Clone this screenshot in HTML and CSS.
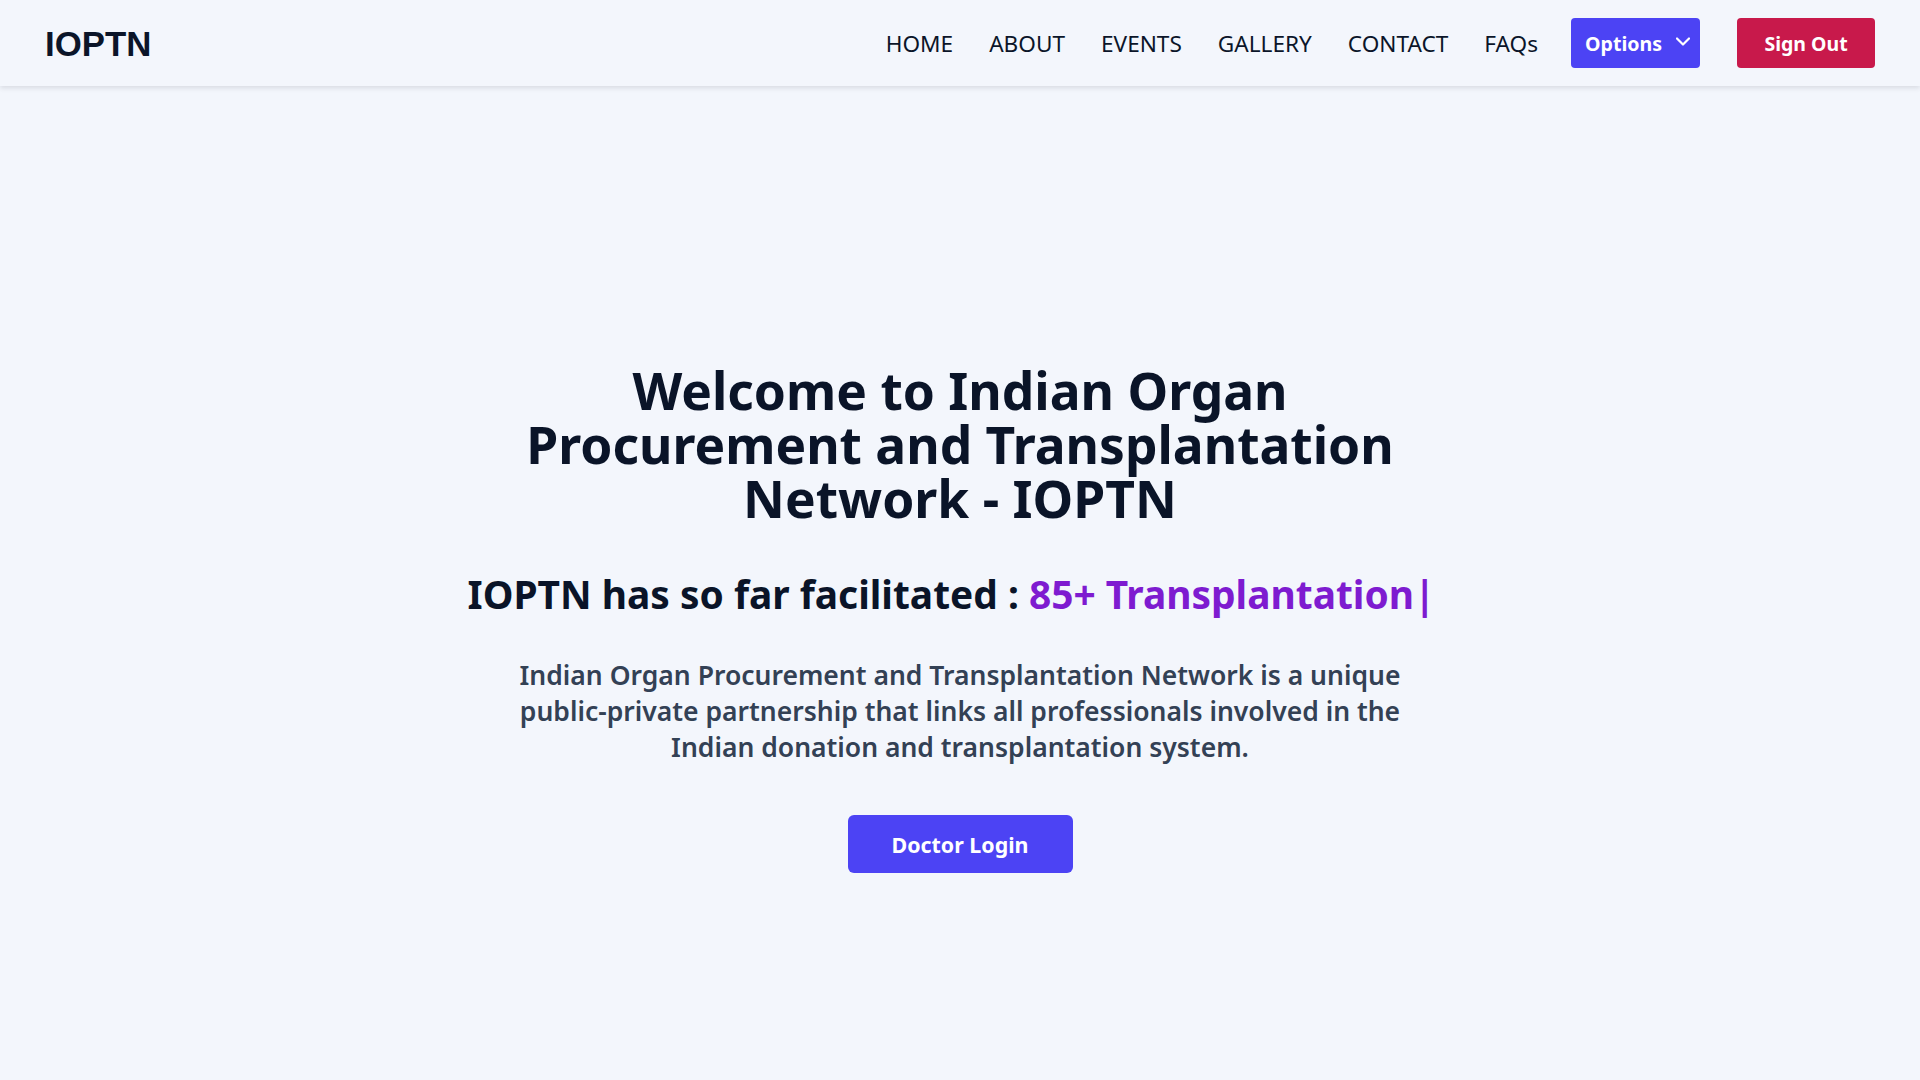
FILE: index.html
```html
<!DOCTYPE html>
<html lang="en">
<head>
<meta charset="utf-8">
<title>IOPTN</title>
<link rel="stylesheet" href="styles.css">
</head>
<body>
<header class="navbar">
  <div class="logo">IOPTN</div>
  <nav class="nav-right">
    <ul class="nav-links">
      <li><a href="#">HOME</a></li>
      <li><a href="#">ABOUT</a></li>
      <li><a href="#">EVENTS</a></li>
      <li><a href="#">GALLERY</a></li>
      <li><a href="#">CONTACT</a></li>
      <li><a href="#">FAQs</a></li>
    </ul>
    <button class="btn btn-options">Options
      <svg class="chevron" width="14" height="9" viewBox="0 0 14 9"><polyline points="1,1.5 7,7.5 13,1.5" fill="none" stroke="#ffffff" stroke-width="2.2" stroke-linecap="round" stroke-linejoin="round"/></svg>
    </button>
    <button class="btn btn-signout">Sign Out</button>
  </nav>
</header>
<main class="hero">
  <h1 class="hero-title">Welcome to Indian Organ Procurement and Transplantation Network - IOPTN</h1>
  <h2 class="hero-sub">IOPTN has so far facilitated : <span class="accent">85+ Transplantation|</span></h2>
  <p class="hero-text">Indian Organ Procurement and Transplantation Network is a unique public-private partnership that links all professionals involved in the Indian donation and transplantation system.</p>
  <button class="btn btn-login">Doctor Login</button>
</main>
</body>
</html>
```
FILE: styles.css
```css
* { box-sizing: border-box; }
html, body { margin: 0; padding: 0; }
body {
  background: #f3f6fc;
  font-family: "Noto Sans", "Open Sans", sans-serif;
  color: #0b1529;
  min-height: 1080px;
}
.navbar {
  height: 86px;
  display: flex;
  align-items: center;
  justify-content: space-between;
  padding: 0 45px 0 45px;
  background: #f3f6fc;
  box-shadow: 0 2px 5px rgba(15, 23, 42, 0.12);
  position: relative;
}
.logo {
  font-family: "Liberation Sans", Arial, sans-serif;
  font-weight: 700;
  font-size: 34.8px;
  color: #0b1529;
  margin-top: 2px;
}
.nav-right {
  display: flex;
  align-items: center;
  gap: 35px;
}
.nav-links {
  list-style: none;
  display: flex;
  gap: 36px;
  margin: 0;
  padding: 0;
}
.nav-links a {
  color: #0b1529;
  text-decoration: none;
  font-size: 22.6px;
  font-weight: 400;
}
.btn {
  border: none;
  color: #ffffff;
  font-family: "Noto Sans", sans-serif;
  font-weight: 700;
  cursor: pointer;
}
.btn-options {
  background: #4c43f4;
  height: 50px;
  width: 129px;
  border-radius: 4px;
  font-size: 19.6px;
  display: flex;
  align-items: center;
  padding: 0 9px 0 14px;
  gap: 14px;
  margin-left: -2px;
}
.chevron { flex: none; margin-top: -3px; }
.btn-signout {
  background: #c8194b;
  height: 50px;
  width: 138px;
  border-radius: 4px;
  font-size: 19.5px;
  margin-left: 2px;
}
.hero {
  display: flex;
  flex-direction: column;
  align-items: center;
  text-align: center;
  padding-top: 277px;
}
.hero-title {
  margin: 0;
  max-width: 900px;
  font-size: 51.5px;
  line-height: 54px;
  font-weight: 700;
  color: #0a1428;
}
.hero-sub {
  margin: 46px 0 0;
  padding-right: 17px;
  font-size: 38.9px;
  line-height: 46px;
  font-weight: 700;
  color: #0a1428;
}
.accent { color: #7e1bd0; }
.hero-text {
  margin: 40px 0 0;
  max-width: 900px;
  font-size: 26.5px;
  line-height: 36px;
  font-weight: 600;
  color: #334155;
}
.btn-login {
  margin-top: 50px;
  width: 225px;
  height: 58px;
  border-radius: 6px;
  background: #4c43f4;
  font-size: 21.4px;
}
```
